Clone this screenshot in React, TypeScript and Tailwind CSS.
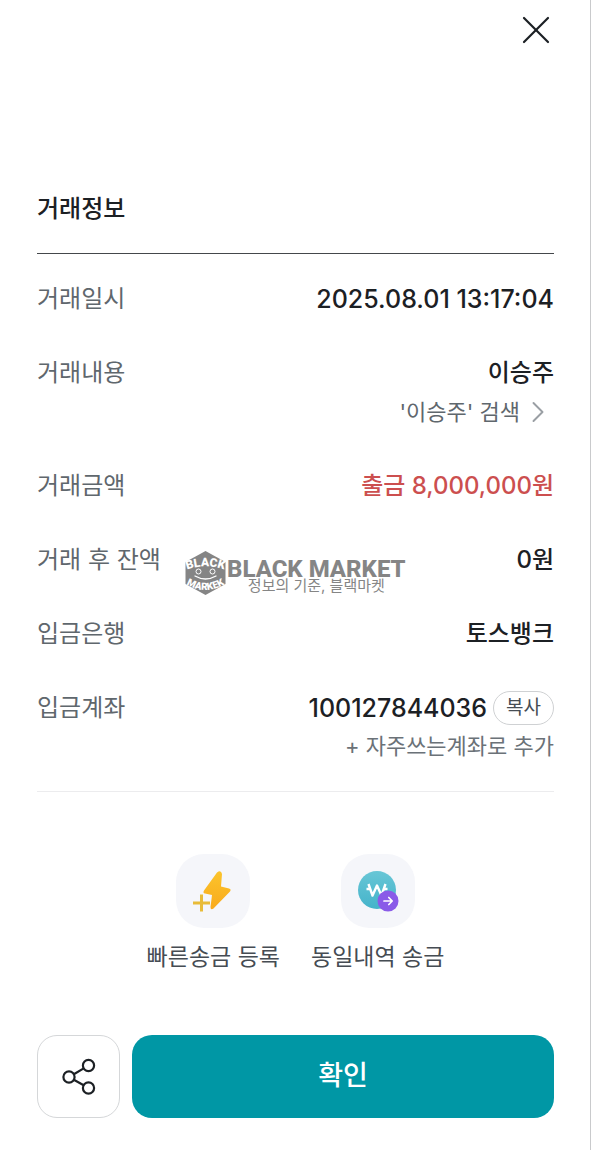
import React from 'react';
import { X, ChevronRight } from 'lucide-react';

interface RowProps {
  label: string;
  children: React.ReactNode;
}

const Row: React.FC<RowProps> = ({ label, children }) => (
  <div className="relative flex items-start justify-between">
    <dt className="text-[24px] leading-[34px] text-[#5f676d]">{label}</dt>
    <dd className="flex flex-col items-end text-[24px] leading-[34px] font-medium text-[#1c2024]">
      {children}
    </dd>
  </div>
);

const HexLogo: React.FC = () => (
  <svg width="43" height="46" viewBox="0 0 43 46" aria-hidden="true">
    <defs>
      <path id="arcTop" d="M1 20.500 Q21.500 12 42 20.500" />
      <path id="arcBottom" d="M1 33.500 Q21.500 46.500 42 33.500" />
    </defs>
    <path d="M21.500 1 L41.500 12 V34 L21.500 45 L1.500 34 V12 Z" fill="#858585" />
    <g fill="#fff" fontFamily="Roboto, sans-serif" fontWeight="900" textAnchor="middle">
      <text fontSize="12">
        <textPath href="#arcTop" startOffset="50%">BLACK</textPath>
      </text>
      <text fontSize="10">
        <textPath href="#arcBottom" startOffset="50%">MARKEK</textPath>
      </text>
    </g>
    <g fill="none" stroke="#fff" strokeWidth="1">
      <circle cx="14.500" cy="21.500" r="2.500" />
      <circle cx="28.500" cy="21.500" r="2.500" />
      <path d="M11 26 Q21.500 32 32 26" strokeWidth="1.300" strokeLinecap="round" />
    </g>
  </svg>
);

const Watermark: React.FC = () => (
  <div className="pointer-events-none absolute top-[7px] left-[147px] flex text-[#858585]">
    <HexLogo />
    <div className="flex flex-col items-center whitespace-nowrap">
      <span className="pt-2 font-[Roboto,sans-serif] text-[24px] leading-[22px] font-extrabold">BLACK MARKET</span>
      <span className="text-[15px] leading-[12px] font-normal">정보의 기준, 블랙마켓</span>
    </div>
  </div>
);

const BoltIcon: React.FC = () => (
  <svg width="42" height="44" viewBox="0 0 42 44" aria-hidden="true">
    <defs>
      <linearGradient id="bolt" x1="0" y1="0" x2="0" y2="1">
        <stop offset="0" stopColor="#fbc42c" />
        <stop offset="1" stopColor="#f9aa1c" />
      </linearGradient>
    </defs>
    <path
      d="M25 3.500 L12 21.500 Q10.500 24 13 24.500 L20 26 L18.500 38 Q18.500 41.500 21.500 39.500 L38 22.500 Q39.500 20 37 19.500 L29 17.500 L30 5 Q29 0.500 25 3.500 Z"
      fill="url(#bolt)"
    />
    <path d="M1 34 H18 M9.500 25.500 V42.500" stroke="#e8bb38" strokeWidth="3" />
  </svg>
);

const WonIcon: React.FC = () => (
  <svg width="42" height="42" viewBox="0 0 42 42" aria-hidden="true">
    <defs>
      <linearGradient id="won" x1="0" y1="0" x2="0" y2="1">
        <stop offset="0" stopColor="#68c6d6" />
        <stop offset="1" stopColor="#45b3ca" />
      </linearGradient>
    </defs>
    <circle cx="20" cy="20" r="19" fill="url(#won)" />
    <path
      d="M11.500 14 L15.500 25.500 L20 15.500 L24.500 25.500 L28.500 14 M9.500 19 H13.500 M26.500 19 H30.500"
      fill="none"
      stroke="#fff"
      strokeWidth="2.400"
      strokeLinejoin="round"
    />
    <circle cx="31" cy="31" r="10.500" fill="#8a5be8" />
    <path
      d="M27 31 H35 M31.800 27.500 L35.200 31 L31.800 34.500"
      fill="none"
      stroke="#fff"
      strokeWidth="1.700"
      strokeLinecap="round"
      strokeLinejoin="round"
    />
  </svg>
);

interface ActionProps {
  label: string;
  icon: React.ReactNode;
}

const Action: React.FC<ActionProps> = ({ label, icon }) => (
  <button type="button" className="flex flex-col items-center gap-3">
    <span className="flex size-[74px] items-center justify-center rounded-[28px] bg-[#f5f6fa]">{icon}</span>
    <span className="text-[23px] leading-[34px] text-[#464c53]">{label}</span>
  </button>
);

const App: React.FC = () => {
  return (
    <main className="flex min-h-screen flex-col border-r border-[#c9cacc] bg-white pr-9 pl-[37px] font-[Inter,'Noto_Sans_CJK_KR',sans-serif]">
      <header className="flex justify-end pt-1.5">
        <button type="button" aria-label="닫기" className="-mr-1.5">
          <X className="size-[48px] text-[#1c2024]" strokeWidth={1.1} />
        </button>
      </header>

      <section className="mt-[138px]">
        <h1 className="border-b border-[#44474b] pb-[27px] text-[24px] leading-[34px] font-medium text-[#1c2024]">
          거래정보
        </h1>

        <dl className="flex flex-col gap-10 border-b border-[#ececee] pt-7 pb-7">
          <Row label="거래일시">
            <span className="text-[25px]">2025.08.01 13:17:04</span>
          </Row>
          <Row label="거래내용">
            이승주
            <a href="#search" className="-mr-0.5 mt-[5px] flex items-center text-[22px] font-normal text-[#5f676d]">
              '이승주' 검색
              <ChevronRight className="-my-1 size-9 text-[#9a9fa4]" strokeWidth={1.3} />
            </a>
          </Row>
          <Row label="거래금액">
            <span className="text-[#cc4f4f]">출금 8,000,000원</span>
          </Row>
          <Row label="거래 후 잔액">
            0원
            <Watermark />
          </Row>
          <Row label="입금은행">토스뱅크</Row>
          <Row label="입금계좌">
            <div className="flex items-center gap-1.5 text-[25px]">
              100127844036
              <button
                type="button"
                className="h-[34px] rounded-full border border-[#cfd1d3] px-3 text-[19px] leading-[30px] font-normal text-[#464c53]"
              >
                복사
              </button>
            </div>
            <a href="#favorite" className="mt-1 text-[22px] font-normal text-[#6b7278]">
              + 자주쓰는계좌로 추가
            </a>
          </Row>
        </dl>
      </section>

      <div className="mt-[62px] flex justify-center gap-[31px]">
        <Action label="빠른송금 등록" icon={<BoltIcon />} />
        <Action label="동일내역 송금" icon={<WonIcon />} />
      </div>

      <footer className="mt-[61px] mb-8 flex gap-3">
        <button
          type="button"
          aria-label="공유"
          className="flex size-[83px] shrink-0 items-center justify-center rounded-[20px] border border-[#d5d7d9]"
        >
          <svg width="36" height="38" viewBox="0 0 36 38" fill="none" stroke="#1c2024" strokeWidth="2.200" aria-hidden="true">
            <circle cx="8" cy="19" r="5.600" />
            <circle cx="27.500" cy="7.500" r="5.600" />
            <circle cx="27.500" cy="30" r="5.600" />
            <path d="M12.800 16.200 L22.700 10.400 M12.800 21.800 L22.700 27.200" />
          </svg>
        </button>
        <button type="button" className="h-[83px] flex-1 rounded-[20px] bg-[#0097a5] text-[27px] font-medium text-white">
          확인
        </button>
      </footer>
    </main>
  );
};

export default App;
